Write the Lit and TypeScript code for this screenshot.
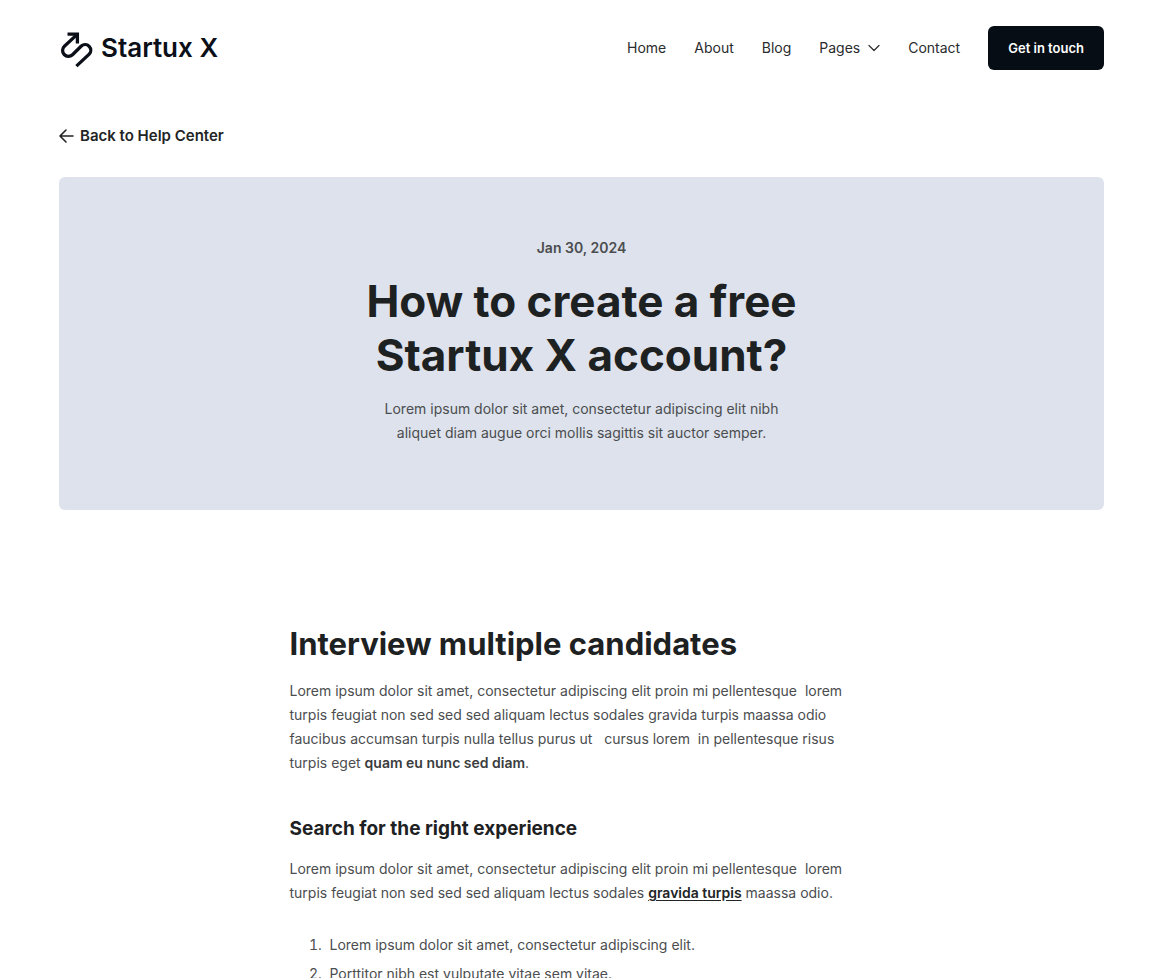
import { LitElement, html, css } from "lit";
import { customElement } from "lit/decorators.js";

@customElement("site-header")
class SiteHeader extends LitElement {
  static styles = css`
    :host { display: block; }
    .bar { display: flex; align-items: center; justify-content: space-between; min-height: 44px; }
    .brand { display: flex; align-items: center; gap: 7px; color: #0a0f18; text-decoration: none; font-size: 26px; font-weight: 600; line-height: 36px; }
    .mark { display: block; width: 35px; height: 40px; }
    .nav { display: flex; align-items: center; gap: 28px; }
    .link { display: flex; align-items: center; gap: 8px; color: #2a2c2d; text-decoration: none; font-size: 14px; line-height: 24px; }
    .chevron { display: block; width: 12px; height: 8px; }
    .cta { height: 44px; padding: 0 20px; border: 0; border-radius: 6px; background: #070d15; color: #fff; font-family: inherit; font-size: 13px; font-weight: 600; cursor: pointer; }
  `;

  render() {
    return html`
      <header class="bar">
        <a class="brand" href="#">
          <svg class="mark" viewBox="0 -1 35 40" fill="none" stroke="currentColor" stroke-width="3.3" aria-hidden="true">
            <path d="M8.5 5.2H18.4V14.6" />
            <path d="M18.2 5.4 5.4 17.2A5.8 5.8 0 0 0 13.5 25.7L22.3 17A5.7 5.7 0 0 1 30.2 25.2L17.4 37.1" />
          </svg>
          <span>Startux X</span>
        </a>
        <nav class="nav" aria-label="Main">
          <a class="link" href="#">Home</a>
          <a class="link" href="#">About</a>
          <a class="link" href="#">Blog</a>
          <a class="link" href="#">
            Pages
            <svg class="chevron" viewBox="0 0 12 8" fill="none" stroke="currentColor" stroke-width="1.2" stroke-linecap="round" stroke-linejoin="round" aria-hidden="true">
              <path d="M1 1.5 6 6.5 11 1.5" />
            </svg>
          </a>
          <a class="link" href="#">Contact</a>
          <button class="cta" type="button">Get in touch</button>
        </nav>
      </header>
    `;
  }
}

@customElement("app-root")
class AppRoot extends LitElement {
  static styles = css`
    :host { display: block; background: #fff; color: #4b4d4f; font-family: Inter, "Liberation Sans", sans-serif; font-size: 14px; line-height: 24px; }
    h1, h2, h3, p, ol { margin: 0; }
    .page { padding: 26px 60px 60px 59px; }
    .back { display: flex; width: fit-content; align-items: center; gap: 6px; margin-top: 54px; color: #222425; text-decoration: none; font-size: 15px; font-weight: 600; }
    .arrow { display: block; width: 15px; height: 14px; }
    .hero { display: flex; flex-direction: column; align-items: center; margin-top: 29px; padding: 59px 24px 65px; border-radius: 6px; background: #dde2ec; text-align: center; }
    .date { font-weight: 600; }
    .title { max-width: 460px; margin-top: 14px; color: #1e2122; font-size: 44px; font-weight: 700; line-height: 54px; }
    .intro { max-width: 420px; margin-top: 15px; }
    .article { max-width: 584px; margin: 114px auto 0; }
    .heading { color: #1e2122; font-size: 31px; font-weight: 700; line-height: 40px; }
    .subheading { margin-top: 41px; color: #1e2122; font-size: 19px; font-weight: 700; line-height: 26px; }
    .text { margin-top: 15px; }
    .strong { font-weight: 600; color: #3a3c3e; }
    .inline-link { color: #222425; font-weight: 600; text-underline-offset: 2px; }
    .steps { display: grid; gap: 5px; margin-top: 28px; padding-left: 36px; }
    .steps li { padding-left: 4px; }
  `;

  render() {
    return html`
      <div class="page">
        <site-header></site-header>
        <main>
          <a class="back" href="#">
            <svg class="arrow" viewBox="0 0 15 14" fill="none" stroke="currentColor" stroke-width="1.6" stroke-linecap="round" stroke-linejoin="round" aria-hidden="true">
              <path d="M14 7H1M7 1 1 7 7 13" />
            </svg>
            <span>Back to Help Center</span>
          </a>
          <section class="hero">
            <time class="date" datetime="2024-01-30">Jan 30, 2024</time>
            <h1 class="title">How to create a free Startux X account?</h1>
            <p class="intro">Lorem ipsum dolor sit amet, consectetur adipiscing elit nibh aliquet diam augue orci mollis sagittis sit auctor semper.</p>
          </section>
          <article class="article">
            <h2 class="heading">Interview multiple candidates</h2>
            <p class="text">Lorem ipsum dolor sit amet, consectetur adipiscing elit proin mi pellentesque&nbsp; lorem turpis feugiat non sed sed sed aliquam lectus sodales gravida turpis maassa odio faucibus accumsan turpis nulla tellus purus ut&nbsp; &nbsp;cursus lorem&nbsp; in pellentesque risus turpis eget <strong class="strong">quam eu nunc sed diam</strong>.</p>
            <h3 class="subheading">Search for the right experience</h3>
            <p class="text">Lorem ipsum dolor sit amet, consectetur adipiscing elit proin mi pellentesque&nbsp; lorem turpis feugiat non sed sed sed aliquam lectus sodales <a class="inline-link" href="#">gravida turpis</a> maassa odio.</p>
            <ol class="steps">
              <li>Lorem ipsum dolor sit amet, consectetur adipiscing elit.</li>
              <li>Porttitor nibh est vulputate vitae sem vitae.</li>
            </ol>
          </article>
        </main>
      </div>
    `;
  }
}
